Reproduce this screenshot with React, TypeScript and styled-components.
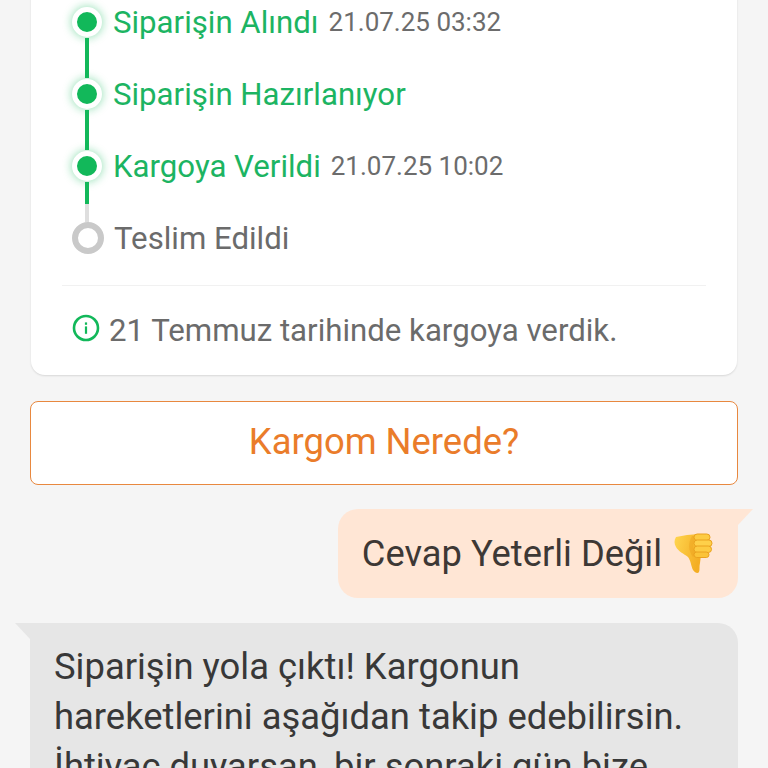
import styled, { createGlobalStyle } from "styled-components";

const GREEN = "#12b85a";
const GREY_RING = "#c9c9c9";

const steps = [
  { label: "Siparişin Alındı", time: "21.07.25 03:32", state: "done", line: "full" },
  { label: "Siparişin Hazırlanıyor", state: "done", line: "full" },
  { label: "Kargoya Verildi", time: "21.07.25 10:02", state: "done", line: "half" },
  { label: "Teslim Edildi", state: "todo", line: "none" },
] as const;

function ThumbsDown() {
  return (
    <svg width="40" height="41" viewBox="0 0 40 41">
      <defs>
        <linearGradient id="palm" x1="0" y1="0" x2="1" y2="0.4">
          <stop offset="0" stopColor="#ffd650" />
          <stop offset="1" stopColor="#f4ae24" />
        </linearGradient>
      </defs>
      <path
        d="M3 4 L14 2 L26 1 L28 22 L27 30 C26 34 27 37 26 39 C25 41 22 40 20 37 C18 33 18 28 15 24 C11 21 5 18 3 14 C1 11 1 7 3 4 Z"
        fill="url(#palm)"
      />
      <path d="M19 3 C15 10 15 17 20 24 L23 21 C19 15 20 9 23 3 Z" fill="#eb9f1c" opacity="0.45" />
      <rect x="21" y="1" width="16" height="6.5" rx="3.2" fill="#fdcb42" stroke="#eaa21f" />
      <rect x="21" y="7" width="18" height="6.5" rx="3.2" fill="#fed04a" stroke="#eaa21f" />
      <rect x="21" y="13" width="17.5" height="6.5" rx="3.2" fill="#fdcb42" stroke="#eaa21f" />
      <rect x="21" y="19" width="15" height="5.5" rx="2.7" fill="#fbc338" stroke="#eaa21f" />
    </svg>
  );
}

function InfoIcon() {
  return (
    <svg width="28" height="28" viewBox="0 0 28 28">
      <circle cx="14" cy="14" r="12" fill="none" stroke={GREEN} strokeWidth="2.6" />
      <rect x="12.9" y="12.4" width="2.2" height="7.4" fill={GREEN} />
      <rect x="12.9" y="8.4" width="2.2" height="2.4" fill={GREEN} />
    </svg>
  );
}

export default function App() {
  return (
    <>
      <GlobalStyle />
      <Page>
        <Card>
          <Timeline>
            {steps.map((step) => (
              <Step key={step.label} $line={step.line}>
                <Marker $state={step.state} />
                <Label $state={step.state}>{step.label}</Label>
                {"time" in step && <Time>{step.time}</Time>}
              </Step>
            ))}
          </Timeline>
          <Divider />
          <Info>
            <InfoIcon />
            <span>21 Temmuz tarihinde kargoya verdik.</span>
          </Info>
        </Card>
        <ActionButton>Kargom Nerede?</ActionButton>
        <UserBubble>
          Cevap Yeterli Değil
          <ThumbsDown />
        </UserBubble>
        <BotBubble>
          Siparişin yola çıktı! Kargonun
          <br />
          hareketlerini aşağıdan takip edebilirsin.
          <br />
          İhtiyaç duyarsan, bir sonraki gün bize
        </BotBubble>
      </Page>
    </>
  );
}

const GlobalStyle = createGlobalStyle`
  html, body {
    margin: 0;
    padding: 0;
    background: #f5f5f5;
    overflow: hidden;
  }
  body {
    font-family: Roboto, "Liberation Sans", sans-serif;
  }
`;

const Page = styled.div`
  height: 768px;
  overflow: hidden;
  padding: 0 30px;
  box-sizing: border-box;
  display: flex;
  flex-direction: column;
`;

const Card = styled.section`
  flex: none;
  margin: -60px 1px 0;
  padding: 46px 31px 0;
  height: 435px;
  box-sizing: border-box;
  background: #fff;
  border-radius: 14px;
  box-shadow: 0 1px 2px rgba(0, 0, 0, 0.12);
`;

const Timeline = styled.div`
  display: flex;
  flex-direction: column;
`;

const Step = styled.div<{ $line: "full" | "half" | "none" }>`
  position: relative;
  height: 72px;
  display: flex;
  align-items: center;
  padding-left: 10px;

  ${({ $line }) =>
    $line !== "none" &&
    `
    &::after {
      content: "";
      position: absolute;
      left: 23px;
      top: 52px;
      width: 4px;
      height: 40px;
      background: ${
        $line === "full"
          ? GREEN
          : `linear-gradient(${GREEN} 0 22px, #dedede 22px)`
      };
    }
  `}
`;

const Marker = styled.span<{ $state: "done" | "todo" }>`
  flex: none;
  box-sizing: border-box;
  width: 32px;
  height: 32px;
  border-radius: 50%;
  margin-right: 10px;
  ${({ $state }) =>
    $state === "done"
      ? `
    background: ${GREEN};
    border: 5px solid #fff;
    width: 30px;
    height: 30px;
    margin: 0 11px 0 0;
    box-shadow: 0 0 8px 1px rgba(18, 184, 90, 0.4);
  `
      : `
    background: #fff;
    border: 6px solid ${GREY_RING};
  `}
`;

const Label = styled.span<{ $state: "done" | "todo" }>`
  padding-top: 1px;
  font-size: 31.2px;
  line-height: 36px;
  color: ${({ $state }) => ($state === "done" ? "#1cb462" : "#6b6b6b")};
`;

const Time = styled.span`
  margin-left: 10px;
  font-size: 26px;
  color: #6c6c6c;
`;

const Divider = styled.hr`
  border: 0;
  height: 1px;
  margin: 11px 0 0;
  background: #f1f1f1;
`;

const Info = styled.div`
  display: flex;
  align-items: center;
  gap: 9px;
  margin: 27px 0 0 10px;
  font-size: 31.2px;
  line-height: 36px;
  color: #6b6b6b;

  svg {
    flex: none;
    margin-top: -7px;
  }
`;

const ActionButton = styled.button`
  flex: none;
  height: 84px;
  margin-top: 26px;
  padding: 0 0 3px;
  background: #fff;
  border: 1.5px solid #e8883f;
  border-radius: 8px;
  font-family: inherit;
  font-size: 36.4px;
  color: #ea7c2a;
`;

const UserBubble = styled.div`
  position: relative;
  flex: none;
  align-self: flex-end;
  display: flex;
  align-items: center;
  gap: 11px;
  box-sizing: border-box;
  height: 89px;
  margin-top: 24px;
  padding: 0 25px 0 24px;
  background: #ffe6d5;
  border-radius: 20px 0 20px 20px;
  font-size: 36.3px;
  color: #3d3835;

  &::after {
    content: "";
    position: absolute;
    top: 0;
    left: 100%;
    width: 15px;
    height: 16px;
    background: #ffe6d5;
    clip-path: polygon(0 0, 100% 0, 0 100%);
  }
`;

const BotBubble = styled.div`
  position: relative;
  flex: none;
  margin-top: 25px;
  padding: 19px 24px 30px;
  background: #e6e6e6;
  border-radius: 0 20px 20px 20px;
  font-size: 36.4px;
  line-height: 50px;
  color: #383838;

  &::before {
    content: "";
    position: absolute;
    top: 0;
    right: 100%;
    width: 15px;
    height: 16px;
    background: #e6e6e6;
    clip-path: polygon(0 0, 100% 0, 100% 100%);
  }
`;
